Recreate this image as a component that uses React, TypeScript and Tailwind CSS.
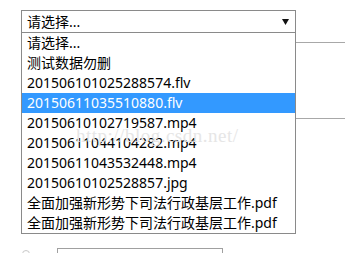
const options = [
  "请选择...",
  "测试数据勿删",
  "201506101025288574.flv",
  "20150611035510880.flv",
  "20150610102719587.mp4",
  "20150611044104282.mp4",
  "20150611043532448.mp4",
  "20150610102528857.jpg",
  "全面加强新形势下司法行政基层工作.pdf",
  "全面加强新形势下司法行政基层工作.pdf",
]

const selected = 3

export default function App() {
  return (
    <div className="relative w-[345px] h-[253px] overflow-hidden bg-white text-black font-['Noto_Sans','Noto_Sans_CJK_SC',sans-serif]">
      {/* page underneath */}
      <div className="pt-[10px]">
        <div className="ml-[21px] flex h-[23px] w-[275px] items-center justify-between border border-[#8a8a8a] pl-[5px] pr-[6px] text-[14px] leading-none">
          <span>请选择...</span>
          <svg width="7" height="6" viewBox="0 0 7 6">
            <path d="M0 0H7L3.5 6Z" fill="#111" />
          </svg>
        </div>
        <div className="ml-[296px] h-[10px] border-b border-[#a8a8a8]" />
        <div className="ml-[296px] h-[76px] border-b border-[#a8a8a8]" />
        <div className="mt-[129px] flex items-start">
          <div className="ml-[22px] mt-[2px] h-[8px] w-[8px] rounded-full border border-[#c8c8c8]" />
          <div className="ml-[27px] h-[20px] w-[166px] border border-[#a0a0a0]" />
        </div>
      </div>

      {/* open dropdown list */}
      <ul className="absolute left-[21px] top-[32px] w-[275px] border border-[#8a8a8a] bg-white text-[14px]">
        {options.map((opt, i) => (
          <li
            key={i}
            className={`h-[20px] whitespace-nowrap pl-[5px] leading-[20px] ${
              i === selected ? "bg-[#3399ff] text-white" : ""
            }`}
          >
            {opt}
          </li>
        ))}
      </ul>

      {/* watermark */}
      <div className="pointer-events-none absolute left-[76px] top-[122px] font-['Liberation_Serif',serif] text-[19px] tracking-[0.5px] text-[#e6e6e6]">
        http://blog.csdn.net/
      </div>
    </div>
  )
}
